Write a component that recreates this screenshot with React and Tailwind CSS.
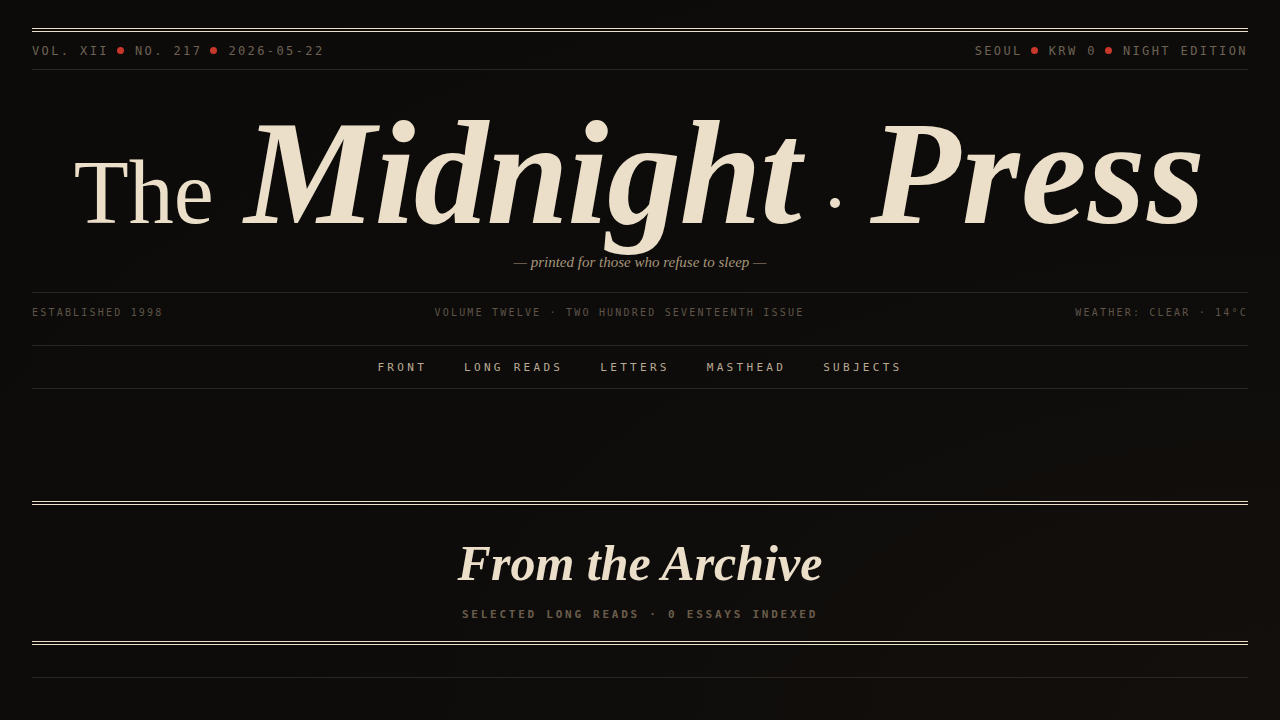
import React from 'react';

const mono = { fontFamily: '"DejaVu Sans Mono", "Liberation Mono", monospace' };
const serif = { fontFamily: '"Liberation Serif", "DejaVu Serif", serif' };

function Dot() {
  return <span className="ml-[8px] mr-[11px] inline-block size-[7px] rounded-full bg-[#c8382a] align-middle" />;
}

function MetaRow() {
  return (
    <div
      className="flex h-[38px] items-center justify-between border-b border-[#2a2621] text-xs tracking-[0.2em] text-[#6e6253]"
      style={mono}
    >
      <div className="flex items-center">
        <span>VOL. XII</span>
        <Dot />
        <span>NO. 217</span>
        <Dot />
        <span>2026-05-22</span>
      </div>
      <div className="flex items-center">
        <span>SEOUL</span>
        <Dot />
        <span>KRW 0</span>
        <Dot />
        <span>NIGHT EDITION</span>
      </div>
    </div>
  );
}

function Masthead() {
  return (
    <div className="border-b border-[#2a2621] pb-[20px] pt-[31px] text-center">
      <h1 className="h-[144px] whitespace-nowrap text-[148px] leading-[144px] text-[#ecdfc9]" style={serif}>
        <span className="text-[90px] font-normal">The </span>
        <span className="ml-[8px] font-bold italic tracking-[-0.01em]">Midnight</span>
        <span className="mx-[30px] inline-block size-[10px] rounded-full bg-[#ecdfc9] align-[15px]" />
        <span className="font-bold italic tracking-[0.01em]">Press</span>
      </h1>
      <p className="mt-[7px] text-[15px] italic leading-[20px] text-[#a8967b]" style={serif}>
        — printed for those who refuse to sleep —
      </p>
    </div>
  );
}

function IssueRow() {
  return (
    <div
      className="flex justify-between border-b border-[#2a2621] pb-[26px] pt-[14px] text-[10px] leading-[12px] tracking-[0.22em] text-[#5e5447]"
      style={mono}
    >
      <span>ESTABLISHED 1998</span>
      <span>VOLUME TWELVE · TWO HUNDRED SEVENTEENTH ISSUE</span>
      <span>WEATHER: CLEAR · 14°C</span>
    </div>
  );
}

function Nav() {
  const items = ['FRONT', 'LONG READS', 'LETTERS', 'MASTHEAD', 'SUBJECTS'];
  return (
    <nav
      className="flex h-[43px] items-center justify-center gap-[37px] border-b border-[#2a2621] pt-[2px] text-[11px] tracking-[0.3em] text-[#b9aa93]"
      style={mono}
    >
      {items.map((item) => (
        <a key={item} href="#" className="hover:text-[#ecdfc9]">
          {item}
        </a>
      ))}
    </nav>
  );
}

function ArchiveHeader() {
  return (
    <section className="mt-[112px] border-y-4 border-double border-[#ecdfc9] pb-[18px] pt-[28px] text-center">
      <h2 className="text-[50px] font-bold italic leading-[60px] text-[#ecdfc9]" style={serif}>
        From the Archive
      </h2>
      <p
        className="mt-[14px] text-[11px] font-bold leading-[16px] tracking-[0.25em] text-[#6b5d4c]"
        style={mono}
      >
        SELECTED LONG READS · 0 ESSAYS INDEXED
      </p>
    </section>
  );
}

export default function App() {
  return (
    <div className="min-h-[720px] w-full bg-[radial-gradient(ellipse_at_bottom_right,#130f0c_0%,#0d0c0b_55%,#0c0b0a_100%)] px-8 pt-[28px]">
      <div className="border-t-4 border-double border-[#ecdfc9]">
        <MetaRow />
        <Masthead />
        <IssueRow />
        <Nav />
        <ArchiveHeader />
        <div className="mt-[32px] border-t border-[#2a2621]" />
      </div>
    </div>
  );
}
